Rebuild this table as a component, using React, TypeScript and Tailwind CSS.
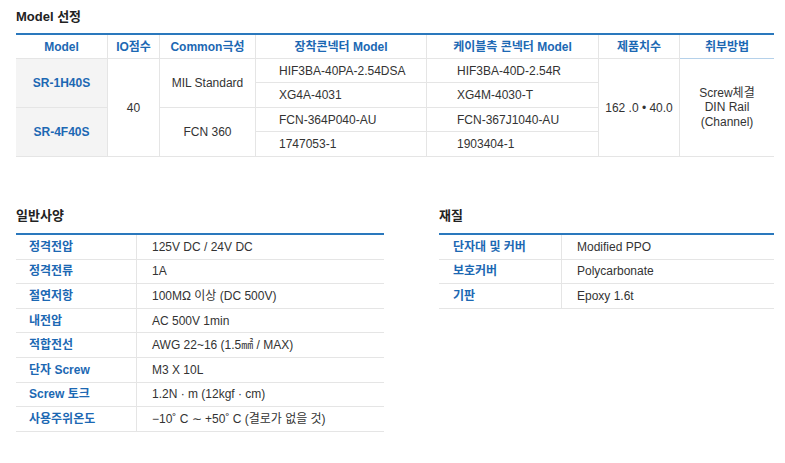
import React from "react";

const font = { fontFamily: '"Liberation Sans", "Noto Sans CJK KR", sans-serif' };

const hdr = "flex items-center justify-center border-b border-[#b5d1ea] text-[12px] font-bold text-[#1c68b3]";
const cellB = "border-b border-[#e5e5e5]";
const cellR = "border-r border-[#e5e5e5]";

function SpecTable({
  rows,
  labelW,
  labelPl,
  valuePl,
  width,
}: {
  rows: [string, string][];
  labelW: number;
  labelPl: string;
  valuePl: string;
  width: string;
}) {
  return (
    <div className={`${width} border-t-2 border-[#2a78bd]`}>
      {rows.map(([k, v], i) => (
        <div key={i} className="flex h-[24.6px] border-b border-[#e5e5e5]">
          <div
            className={`flex items-center ${labelPl} border-r border-[#e5e5e5] text-[12px] font-bold text-[#1c68b3]`}
            style={{ width: labelW }}
          >
            {k}
          </div>
          <div className={`flex flex-1 items-center ${valuePl} text-[12px] text-[#333]`}>{v}</div>
        </div>
      ))}
    </div>
  );
}

export default function App() {
  return (
    <div className="w-[785px] h-[463px] bg-white px-[16px]" style={font}>
      <div className="h-[33px] flex items-center text-[13px] font-bold text-[#222]">Model 선정</div>
      <div className="w-[758px] border-t-2 border-[#2a78bd] grid grid-cols-[92px_52px_96px_171px_172px_81px_94px] grid-rows-[24px_24px_25px_24px_25px]">
        <div className={`${hdr} ${cellR} col-start-1 row-start-1`}>Model</div>
        <div className={`${hdr} ${cellR} col-start-2 row-start-1`}>IO점수</div>
        <div className={`${hdr} ${cellR} col-start-3 row-start-1`}>Common극성</div>
        <div className={`${hdr} ${cellR} col-start-4 row-start-1`}>장착콘넥터 Model</div>
        <div className={`${hdr} ${cellR} col-start-5 row-start-1`}>케이블측 콘넥터 Model</div>
        <div className={`${hdr} ${cellR} col-start-6 row-start-1`}>제품치수</div>
        <div className={`${hdr} col-start-7 row-start-1`}>취부방법</div>

        <div className={`${cellB} ${cellR} col-start-1 row-start-2 row-span-2 bg-[#f4f4f4] flex items-center justify-center text-[12px] font-bold text-[#1c68b3]`}>SR-1H40S</div>
        <div className={`${cellB} ${cellR} col-start-1 row-start-4 row-span-2 bg-[#f4f4f4] flex items-center justify-center text-[12px] font-bold text-[#1c68b3]`}>SR-4F40S</div>

        <div className={`${cellB} ${cellR} col-start-2 row-start-2 row-span-4 flex items-center justify-center text-[12px] text-[#333]`}>40</div>

        <div className={`${cellB} ${cellR} col-start-3 row-start-2 row-span-2 flex items-center justify-center text-[12px] text-[#333]`}>MIL Standard</div>
        <div className={`${cellB} ${cellR} col-start-3 row-start-4 row-span-2 flex items-center justify-center text-[12px] text-[#333]`}>FCN 360</div>

        <div className={`${cellB} ${cellR} col-start-4 row-start-2 flex items-center pl-[23px] text-[12px] text-[#333]`}>HIF3BA-40PA-2.54DSA</div>
        <div className={`${cellB} ${cellR} col-start-4 row-start-3 flex items-center pl-[23px] text-[12px] text-[#333]`}>XG4A-4031</div>
        <div className={`${cellB} ${cellR} col-start-4 row-start-4 flex items-center pl-[23px] text-[12px] text-[#333]`}>FCN-364P040-AU</div>
        <div className={`${cellB} ${cellR} col-start-4 row-start-5 flex items-center pl-[23px] text-[12px] text-[#333]`}>1747053-1</div>

        <div className={`${cellB} ${cellR} col-start-5 row-start-2 flex items-center pl-[30px] text-[12px] text-[#333]`}>HIF3BA-40D-2.54R</div>
        <div className={`${cellB} ${cellR} col-start-5 row-start-3 flex items-center pl-[30px] text-[12px] text-[#333]`}>XG4M-4030-T</div>
        <div className={`${cellB} ${cellR} col-start-5 row-start-4 flex items-center pl-[30px] text-[12px] text-[#333]`}>FCN-367J1040-AU</div>
        <div className={`${cellB} ${cellR} col-start-5 row-start-5 flex items-center pl-[30px] text-[12px] text-[#333]`}>1903404-1</div>

        <div className={`${cellB} ${cellR} col-start-6 row-start-2 row-span-4 flex items-center justify-center text-[12px] text-[#333]`}>162 .0 • 40.0</div>
        <div className={`${cellB} col-start-7 row-start-2 row-span-4 flex flex-col items-center justify-center text-[12px] leading-[14.5px] text-[#333]`}>
          <span>Screw체결</span>
          <span>DIN Rail</span>
          <span>(Channel)</span>
        </div>
      </div>

      <div className="mt-[42px] flex gap-[55px]">
        <div className="flex flex-col">
          <div className="h-[34px] flex items-center text-[13px] font-bold text-[#222]">일반사양</div>
          <SpecTable
            width="w-[368px]"
            labelW={121}
            labelPl="pl-[13px]"
            valuePl="pl-[15px]"
            rows={[
              ["정격전압", "125V DC / 24V DC"],
              ["정격전류", "1A"],
              ["절연저항", "100MΩ 이상 (DC 500V)"],
              ["내전압", "AC 500V 1min"],
              ["적합전선", "AWG 22~16 (1.5㎟ / MAX)"],
              ["단자 Screw", "M3 X 10L"],
              ["Screw 토크", "1.2N · m (12kgf · cm)"],
              ["사용주위온도", "−10˚ C ∼ +50˚ C (결로가 없을 것)"],
            ]}
          />
        </div>
        <div className="flex flex-col">
          <div className="h-[34px] flex items-center text-[13px] font-bold text-[#222]">재질</div>
          <SpecTable
            width="w-[335px]"
            labelW={123}
            labelPl="pl-[14px]"
            valuePl="pl-[15px]"
            rows={[
              ["단자대 및 커버", "Modified PPO"],
              ["보호커버", "Polycarbonate"],
              ["기판", "Epoxy 1.6t"],
            ]}
          />
        </div>
      </div>
    </div>
  );
}
